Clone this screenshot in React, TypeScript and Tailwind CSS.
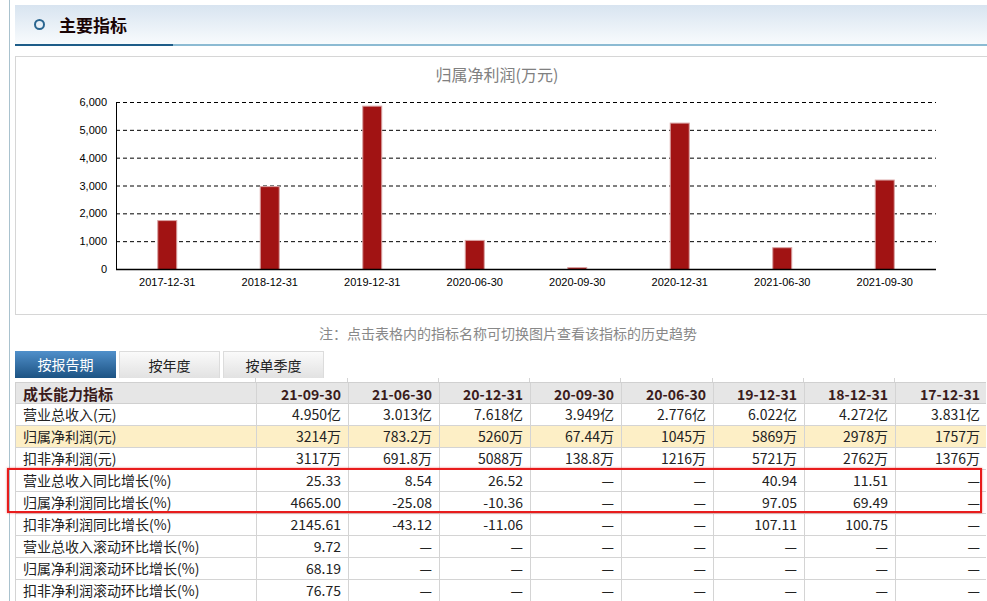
import React from "react";

const cats = ["2017-12-31", "2018-12-31", "2019-12-31", "2020-06-30", "2020-09-30", "2020-12-31", "2021-06-30", "2021-09-30"];
const vals = [1757, 2978, 5869, 1045, 67.44, 5260, 783.2, 3214];

const X0 = 116;
const X1 = 936;
const Y0 = 269;
const YTOP = 102;
const step = (X1 - X0) / 8;
const yOf = (v: number) => Y0 - (v * (Y0 - YTOP)) / 6000;

function Chart() {
  const ticks = [0, 1000, 2000, 3000, 4000, 5000, 6000];
  return (
    <svg width={971} height={257} viewBox="16 57 971 257" className="block">
      <text x={497} y={81} textAnchor="middle" fontSize={16} fill="#808080" fontFamily="'Noto Sans CJK SC', sans-serif">
        归属净利润(万元)
      </text>
      {ticks.map((t) => (
        <g key={t}>
          {t > 0 && (
            <line x1={X0} x2={X1} y1={yOf(t) + 0.5} y2={yOf(t) + 0.5} stroke="#000" strokeWidth={1} strokeDasharray="4 3" />
          )}
          <text x={107} y={yOf(t) + 4} textAnchor="end" fontSize={11} fill="#000" fontFamily="'Liberation Sans', sans-serif">
            {t === 0 ? "0" : t.toLocaleString("en-US")}
          </text>
        </g>
      ))}
      {vals.map((v, i) => {
        const cx = X0 + step * (i + 0.5);
        const top = yOf(v);
        return (
          <rect key={i} x={cx - 10 + 0.5} y={top + 0.5} width={19} height={Y0 - top} fill="#a11313" stroke="#d9a3a3" strokeWidth={1} />
        );
      })}
      <line x1={X0 + 0.5} x2={X0 + 0.5} y1={YTOP} y2={Y0} stroke="#000" strokeWidth={1} />
      <line x1={X0} x2={X1} y1={Y0 + 0.5} y2={Y0 + 0.5} stroke="#000" strokeWidth={1.5} />
      {cats.map((c, i) => (
        <text key={c} x={X0 + step * (i + 0.5)} y={286} textAnchor="middle" fontSize={11} fill="#000" fontFamily="'Liberation Sans', sans-serif">
          {c}
        </text>
      ))}
    </svg>
  );
}

const cols = "grid grid-cols-[240px_92px_91px_91px_91px_92px_91px_91px_92px]";

const headers = ["21-09-30", "21-06-30", "20-12-31", "20-09-30", "20-06-30", "19-12-31", "18-12-31", "17-12-31"];

const rows: { name: string; v: string[]; hl?: boolean }[] = [
  { name: "营业总收入(元)", v: ["4.950亿", "3.013亿", "7.618亿", "3.949亿", "2.776亿", "6.022亿", "4.272亿", "3.831亿"] },
  { name: "归属净利润(元)", v: ["3214万", "783.2万", "5260万", "67.44万", "1045万", "5869万", "2978万", "1757万"], hl: true },
  { name: "扣非净利润(元)", v: ["3117万", "691.8万", "5088万", "138.8万", "1216万", "5721万", "2762万", "1376万"] },
  { name: "营业总收入同比增长(%)", v: ["25.33", "8.54", "26.52", "—", "—", "40.94", "11.51", "—"] },
  { name: "归属净利润同比增长(%)", v: ["4665.00", "-25.08", "-10.36", "—", "—", "97.05", "69.49", "—"] },
  { name: "扣非净利润同比增长(%)", v: ["2145.61", "-43.12", "-11.06", "—", "—", "107.11", "100.75", "—"] },
  { name: "营业总收入滚动环比增长(%)", v: ["9.72", "—", "—", "—", "—", "—", "—", "—"] },
  { name: "归属净利润滚动环比增长(%)", v: ["68.19", "—", "—", "—", "—", "—", "—", "—"] },
  { name: "扣非净利润滚动环比增长(%)", v: ["76.75", "—", "—", "—", "—", "—", "—", "—"] },
];

export default function App() {
  return (
    <div
      className="relative w-[987px] h-[601px] overflow-hidden bg-white text-[#222]"
      style={{ fontFamily: "'Noto Sans CJK SC', 'Noto Sans', sans-serif" }}
    >
      <div className="pl-[9px] h-full">
        <div className="border-l border-[#a9c2ce] pl-[5px] h-full w-[990px]">
          {/* Header */}
          <div className="pt-[5px]">
            <div className="h-[39px] bg-gradient-to-b from-[#d8e4f0] to-[#f8fbfd] flex items-center">
              <div className="ml-[19px] w-[11px] h-[11px] rounded-full border-[2.5px] border-[#2a6690]" />
              <div className="ml-[14px] text-[17px] font-bold text-[#1a0505] leading-none">主要指标</div>
            </div>
            <div className="flex h-[2px]">
              <div className="w-[158px] bg-[#1e5d89]" />
              <div className="flex-1 bg-[#8cbbd3]" />
            </div>
          </div>

          {/* Chart panel */}
          <div className="mt-[10px] border border-[#d6d6d6] h-[259px] overflow-hidden">
            <Chart />
          </div>

          {/* Note */}
          <div className="h-[36px] flex items-center justify-center pl-[14px] w-[972px] text-[14px] text-[#888]">
            注：点击表格内的指标名称可切换图片查看该指标的历史趋势
          </div>

          {/* Tabs */}
          <div className="flex gap-[3px] h-[27px]">
            <div className="w-[101px] flex items-center justify-center text-[14px] text-white bg-gradient-to-b from-[#5090cb] to-[#1c5383]">
              按报告期
            </div>
            <div className="w-[101px] flex items-center justify-center text-[14px] text-[#222] bg-gradient-to-b from-[#fafafa] to-[#e2e2e2] border border-b-0 border-[#dcdcdc]">
              按年度
            </div>
            <div className="w-[101px] flex items-center justify-center text-[14px] text-[#222] bg-gradient-to-b from-[#fafafa] to-[#e2e2e2] border border-b-0 border-[#dcdcdc]">
              按单季度
            </div>
          </div>

          {/* Table */}
          <div className="w-[971px]">
            <div className={`${cols} h-[4px]`}>
              <div />
              {headers.map((h) => (
                <div key={h} className="border-l border-[#d4d4d4]" />
              ))}
            </div>
            <div className={`${cols} h-[22px] bg-[#e6e6e6] border-t border-b border-[#d0d0d0] border-l`}>
              <div className="flex items-center pl-[7px] text-[15px] font-bold text-[#3a1c1c]">成长能力指标</div>
              {headers.map((h) => (
                <div key={h} className="border-l border-[#d4d4d4] flex items-center justify-end pr-[7px] text-[14px] font-bold text-[#3a1c1c]">
                  {h}
                </div>
              ))}
            </div>
            {rows.map((r) => (
              <div key={r.name} className={`${cols} h-[22px] border-b border-l border-[#d4d4d4] ${r.hl ? "bg-[#fdefc6]" : ""}`}>
                <div className="flex items-center pl-[7px] text-[14px] whitespace-nowrap">{r.name}</div>
                {r.v.map((v, i) => (
                  <div key={i} className="border-l border-[#d4d4d4] flex items-center justify-end pr-[7px] text-[14px] whitespace-nowrap">
                    {v}
                  </div>
                ))}
              </div>
            ))}
          </div>
        </div>
      </div>

      {/* Red highlight box */}
      <div className="absolute left-[7px] top-[468px] w-[975px] h-[45px] border-2 border-[#e81c1c] shadow-[0_0_2px_rgba(232,28,28,0.6)] pointer-events-none" />
    </div>
  );
}
